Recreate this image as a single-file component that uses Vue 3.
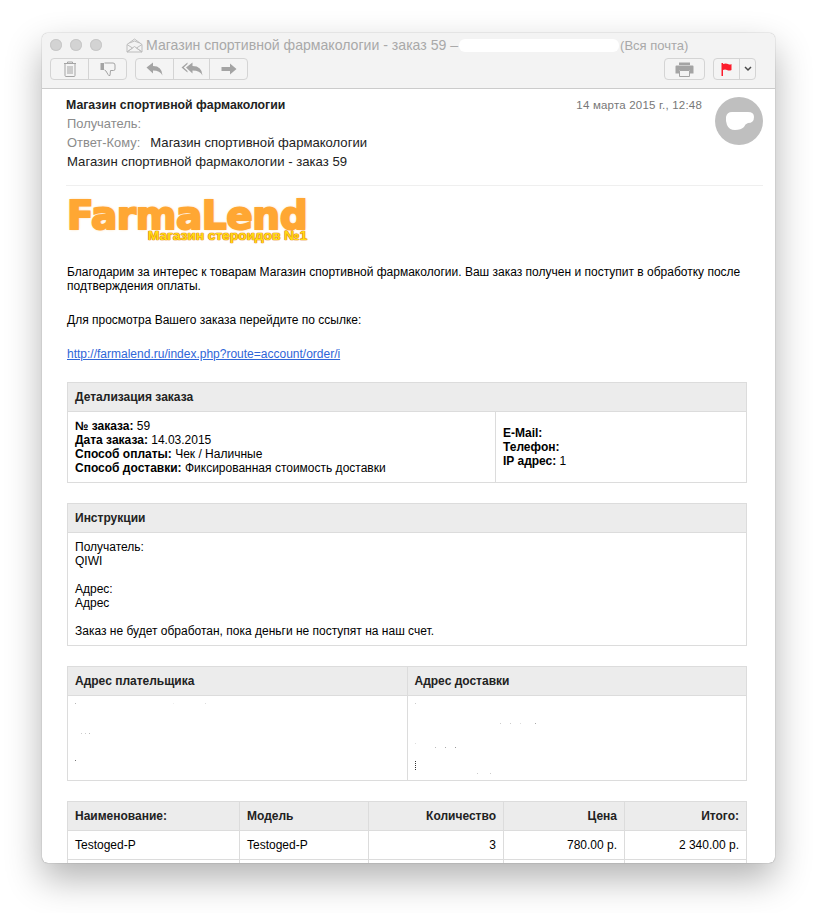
<template>
  <div class="page">
    <div class="window">
      <div class="chrome">
        <div class="titlebar">
          <div class="lights"><i></i><i></i><i></i></div>
          <svg class="env" width="17" height="15" viewBox="0 0 17 15" fill="none" stroke="#bdbdbd">
            <path d="M1 6.500 8.500 1 16 6.500V14H1Z" />
            <path d="M1 6.500 6.500 10 1 14M16 6.500 10.500 10 16 14M1 14 8.500 8.500 16 14M3.500 5 8.500 3 13.500 5" />
          </svg>
          <span class="title">Магазин спортивной фармакологии - заказ 59 –</span>
          <span class="title-hide"></span>
          <span class="title tail">(Вся почта)</span>
        </div>
        <div class="toolbar">
          <div class="group g1">
            <button class="w37">
              <svg width="14" height="16" viewBox="0 0 14 16" fill="none" stroke="#a4a4a4">
                <path d="M1 2.500H13M4.500 2.500V1H9.500V2.500M2 3V14.500Q2 15.500 3 15.500H11Q12 15.500 12 14.500V3M5 5V13M7 5V13M9 5V13" />
              </svg>
            </button>
            <button class="w38">
              <svg width="16" height="15" viewBox="0 0 16 15">
                <path d="M0.500 1H4V8H0.500Z" fill="#a4a4a4" />
                <path d="M4.500 1H13Q15 1 15 3V7Q15 8.500 13.500 8.500H10.500L10 13.500Q8.500 14 8 12.500L6 9 4.500 8" fill="none" stroke="#a4a4a4" />
              </svg>
            </button>
          </div>
          <div class="group g2">
            <button class="w37">
              <svg width="17" height="14" viewBox="0 0 17 14" fill="#a4a4a4">
                <path d="M0.500 5.500 7 0.500V4Q16 4 16.500 13.500 14 8.500 7 8.500V11.500Z" />
              </svg>
            </button>
            <button class="w36">
              <svg width="22" height="14" viewBox="0 0 22 14" fill="#a4a4a4">
                <path d="M0.500 5.500 6.500 0.500V2L2.700 5.500 6.500 9V10.500Z" />
                <path d="M5 5.500 11.500 0.500V4Q21 4 21.500 13.500 19 8.500 11.500 8.500V11.500Z" />
              </svg>
            </button>
            <button class="w38">
              <svg width="16" height="12" viewBox="0 0 16 12" fill="#a4a4a4">
                <path d="M0.500 4H9V0.500L15.500 6 9 11.500V8H0.500Z" />
              </svg>
            </button>
          </div>
          <div class="spacer"></div>
          <div class="group g3">
            <button class="print">
              <svg width="19" height="15" viewBox="0 0 19 15">
                <path d="M4 0.500H15V3H4Z" fill="#a4a4a4" />
                <path d="M1.500 3.500H17.500Q18.500 3.500 18.500 4.500V11.500H15V8H4V11.500H0.500V4.500Q0.500 3.500 1.500 3.500Z" fill="#a4a4a4" />
                <path d="M4.500 8.500H14.500V14.500H4.500Z" fill="#f3f3f3" stroke="#a4a4a4" />
              </svg>
            </button>
          </div>
          <div class="group g4">
            <button class="flag">
              <svg width="11" height="13" viewBox="0 0 11 13">
                <path d="M0.500 0H2V13H0.500Z" fill="#fc1c2c" />
                <path d="M2 1Q5 0 7 1T10.500 1V7Q8 8 6 7T2 7Z" fill="#fc1c2c" />
              </svg>
            </button>
            <button class="more">
              <svg width="8" height="6" viewBox="0 0 8 6" fill="none" stroke="#4a4a4a" stroke-width="1.500">
                <path d="M1 1 4 4 7 1" />
              </svg>
            </button>
          </div>
        </div>
      </div>

      <div class="mail">
        <div class="head">
          <div class="head-text">
            <div class="head-row first">
              <strong class="from">Магазин спортивной фармакологии</strong>
              <span class="date">14 марта 2015 г., 12:48</span>
            </div>
            <div class="head-row"><span class="label indent">Получатель:</span></div>
            <div class="head-row">
              <span class="label indent">Ответ-Кому:</span>
              <span class="reply">Магазин спортивной фармакологии</span>
            </div>
            <div class="head-row"><span class="indent">Магазин спортивной фармакологии - заказ 59</span></div>
          </div>
          <svg class="avatar" width="48" height="48" viewBox="0 0 48 48">
            <circle cx="24" cy="24" r="24" fill="#bfbfbf" />
            <path d="M17 15H33Q39 15 39 20 39 26 33 26 30 27 29 30 26 33 20 33 14 33 12 28 10.500 24 11 20 12 15 17 15Z" fill="#fff" />
          </svg>
        </div>

        <div class="content">
          <div class="logo">
            <span class="logo-main">FarmaLend</span>
            <span class="logo-sub">Магазин стероидов №1</span>
          </div>

          <p class="intro">Благодарим за интерес к товарам Магазин спортивной фармакологии. Ваш заказ получен и поступит в обработку после подтверждения оплаты.</p>
          <p>Для просмотра Вашего заказа перейдите по ссылке:</p>
          <p class="link-row"><a class="link">http://farmalend.ru/index.php?route=account/order/i</a></p>

          <table>
            <colgroup><col style="width: 428px" /><col /></colgroup>
            <thead>
              <tr><th colspan="2">Детализация заказа</th></tr>
            </thead>
            <tbody>
              <tr>
                <td>
                  <b>№ заказа:</b> 59<br />
                  <b>Дата заказа:</b> 14.03.2015<br />
                  <b>Способ оплаты:</b> Чек / Наличные<br />
                  <b>Способ доставки:</b> Фиксированная стоимость доставки
                </td>
                <td>
                  <b>E-Mail:</b><br />
                  <b>Телефон:</b><br />
                  <b>IP адрес:</b> 1
                </td>
              </tr>
            </tbody>
          </table>

          <table>
            <thead>
              <tr><th>Инструкции</th></tr>
            </thead>
            <tbody>
              <tr>
                <td>
                  Получатель:<br />QIWI<br /><br />
                  Адрес:<br />Адрес<br /><br />
                  Заказ не будет обработан, пока деньги не поступят на наш счет.
                </td>
              </tr>
            </tbody>
          </table>

          <table>
            <thead>
              <tr><th>Адрес плательщика</th><th>Адрес доставки</th></tr>
            </thead>
            <tbody>
              <tr><td class="blank specks-l"></td><td class="blank specks-r"></td></tr>
            </tbody>
          </table>

          <table>
            <colgroup>
              <col v-for="col in columns" :key="col.name" :style="{ width: col.width ? col.width + 'px' : null }" />
            </colgroup>
            <thead>
              <tr>
                <th v-for="col in columns" :key="col.name" :class="{ right: col.right }">{{ col.name }}</th>
              </tr>
            </thead>
            <tbody>
              <tr v-for="row in rows" :key="row.name">
                <td>{{ row.name }}</td>
                <td>{{ row.model }}</td>
                <td class="right">{{ row.qty }}</td>
                <td class="right">{{ row.price }}</td>
                <td class="right">{{ row.total }}</td>
              </tr>
              <tr><td class="cut" v-for="col in columns" :key="col.name"></td></tr>
            </tbody>
          </table>
        </div>
      </div>
    </div>
  </div>
</template>

<script setup>
const columns = [
  { name: 'Наименование:', width: 172 },
  { name: 'Модель', width: 129 },
  { name: 'Количество', width: 135, right: true },
  { name: 'Цена', width: 121, right: true },
  { name: 'Итого:', right: true },
];

const rows = [
  { name: 'Testoged-P', model: 'Testoged-P', qty: 3, price: '780.00 р.', total: '2 340.00 р.' },
];
</script>

<style scoped>
.page {
  width: 817px;
  height: 913px;
  padding: 33px 42px 50px;
  box-sizing: border-box;
  background: #fff;
  font-family: "Liberation Sans", Arial, sans-serif;
  overflow: hidden;
}
.window {
  width: 733px;
  height: 830px;
  display: flex;
  flex-direction: column;
  border-radius: 6px;
  overflow: hidden;
  background: #fff;
  box-shadow: 0 0 1px rgba(0, 0, 0, 0.55), 0 16px 36px rgba(0, 0, 0, 0.3);
}
.chrome {
  height: 55px;
  background: #f3f3f3;
  border-bottom: 1px solid #cbcbcb;
  flex: none;
}
.titlebar {
  height: 24px;
  display: flex;
  align-items: center;
  padding-left: 8px;
}
.lights {
  display: flex;
  gap: 8px;
  width: 76px;
}
.lights i {
  width: 12px;
  height: 12px;
  border-radius: 50%;
  background: #d3d3d3;
  box-shadow: inset 0 0 0 1px #c8c8c8;
}
.env {
  margin-right: 3px;
}
.title {
  font-size: 14.1px;
  color: #a9a9a9;
  white-space: nowrap;
}
.title.tail {
  font-size: 13px;
}
.title-hide {
  width: 160px;
  height: 13px;
  margin: 0 1px;
  border-radius: 6px;
  background: #fff;
}
.toolbar {
  display: flex;
  padding-left: 8px;
  padding-top: 1px;
}
.spacer {
  flex: 1;
}
.group {
  display: flex;
  height: 22px;
  box-sizing: border-box;
  border: 1px solid #d4d4d4;
  border-radius: 4px;
  background: #f4f4f4;
}
.group button {
  height: 20px;
  padding: 0;
  border: 0;
  background: none;
  display: flex;
  align-items: center;
  justify-content: center;
}
.group button + button {
  border-left: 1px solid #d4d4d4;
}
.g2 {
  margin-left: 8px;
}
.g4 {
  margin-left: 8px;
  margin-right: 19px;
}
.w37 {
  width: 37px;
}
.w38 {
  width: 38px;
}
.w36 {
  width: 36px;
}
.print {
  width: 39px;
}
.flag {
  width: 25px;
}
.more {
  width: 16px;
}
.mail {
  flex: 1;
  overflow: hidden;
}
.head {
  margin: 0 12px 0 24px;
  height: 97px;
  box-sizing: border-box;
  border-bottom: 1px solid #efefef;
  display: flex;
  padding-top: 8px;
}
.head-text {
  flex: 1;
  font-size: 13.15px;
  color: #222;
}
.head-row {
  height: 19px;
  line-height: 17px;
  display: flex;
  white-space: nowrap;
}
.head-row.first {
  height: 18px;
}
.from {
  font-size: 12.3px;
  color: #222;
}
.date {
  margin-left: auto;
  margin-right: 13px;
  font-size: 11.5px;
  letter-spacing: 0.2px;
  color: #777;
}
.label {
  font-size: 12.9px;
  color: #8b8b8b;
}
.indent {
  margin-left: 1px;
}
.reply {
  margin-left: 10px;
  font-size: 13.1px;
}
.avatar {
  flex: none;
}
.content {
  padding: 0 28px 0 25px;
  font-size: 12px;
  line-height: 14px;
  color: #000;
}
.logo {
  height: 39px;
  width: 240px;
  margin-top: 17px;
  position: relative;
}
.logo-main {
  display: block;
  font-family: "DejaVu Sans", sans-serif;
  font-weight: bold;
  font-size: 39px;
  line-height: 26px;
  letter-spacing: -0.4px;
  color: #ffa733;
  -webkit-text-stroke: 2px #ffa733;
  text-shadow: 0 0 3px #ffd9a8, 0 0 3px #ffd9a8;
  white-space: nowrap;
}
.logo-sub {
  position: absolute;
  right: 0;
  bottom: 0;
  font-size: 13.7px;
  font-weight: bold;
  line-height: 12px;
  color: #ffdc14;
  text-shadow: 0 0 1px #e06c00, 0 0 1px #e06c00, 0 0 1px #e06c00;
  white-space: nowrap;
}
p {
  margin: 0 0 20px;
}
.intro {
  margin-top: 23px;
}
.link-row {
  margin-bottom: 21px;
}
.link {
  color: #2f66d8;
  text-decoration: underline;
  white-space: nowrap;
}
table {
  width: 680px;
  border-collapse: collapse;
  table-layout: fixed;
  margin-bottom: 20px;
  font-size: 12px;
  line-height: 14px;
}
th,
td {
  border: 1px solid #dcdcdc;
  padding: 7px;
  text-align: left;
  vertical-align: middle;
}
th {
  background: #ececec;
  color: #222;
  height: 14px;
  font-weight: bold;
}
.blank {
  height: 70px;
  position: relative;
}
.blank::before {
  content: "";
  position: absolute;
  left: 7px;
  top: 7px;
  width: 1px;
  height: 1px;
}
.specks-l::before {
  background: #b8b8b8;
  box-shadow: 98px 0 #eee, 130px 0 #ddd, 6px 30px #ccc, 10px 30px #ccc, 14px 30px #bbb, 0 57px #777;
}
.specks-r::before {
  background: #ccc;
  box-shadow: 85px 20px #ccc, 95px 20px #ccc, 105px 20px #ddd, 120px 20px #aaa, 0 40px #ddd, 20px 44px #bbb, 30px 44px #aaa, 40px 44px #999, 0 58px #333, 0 60px #333, 0 62px #333, 0 64px #333, 0 66px #333, 62px 70px #ccc, 75px 70px #ccc;
}
.right {
  text-align: right;
}
.cut {
  height: 14px;
}
</style>

<style>
html,
body {
  margin: 0;
  background: #fff;
}
</style>
